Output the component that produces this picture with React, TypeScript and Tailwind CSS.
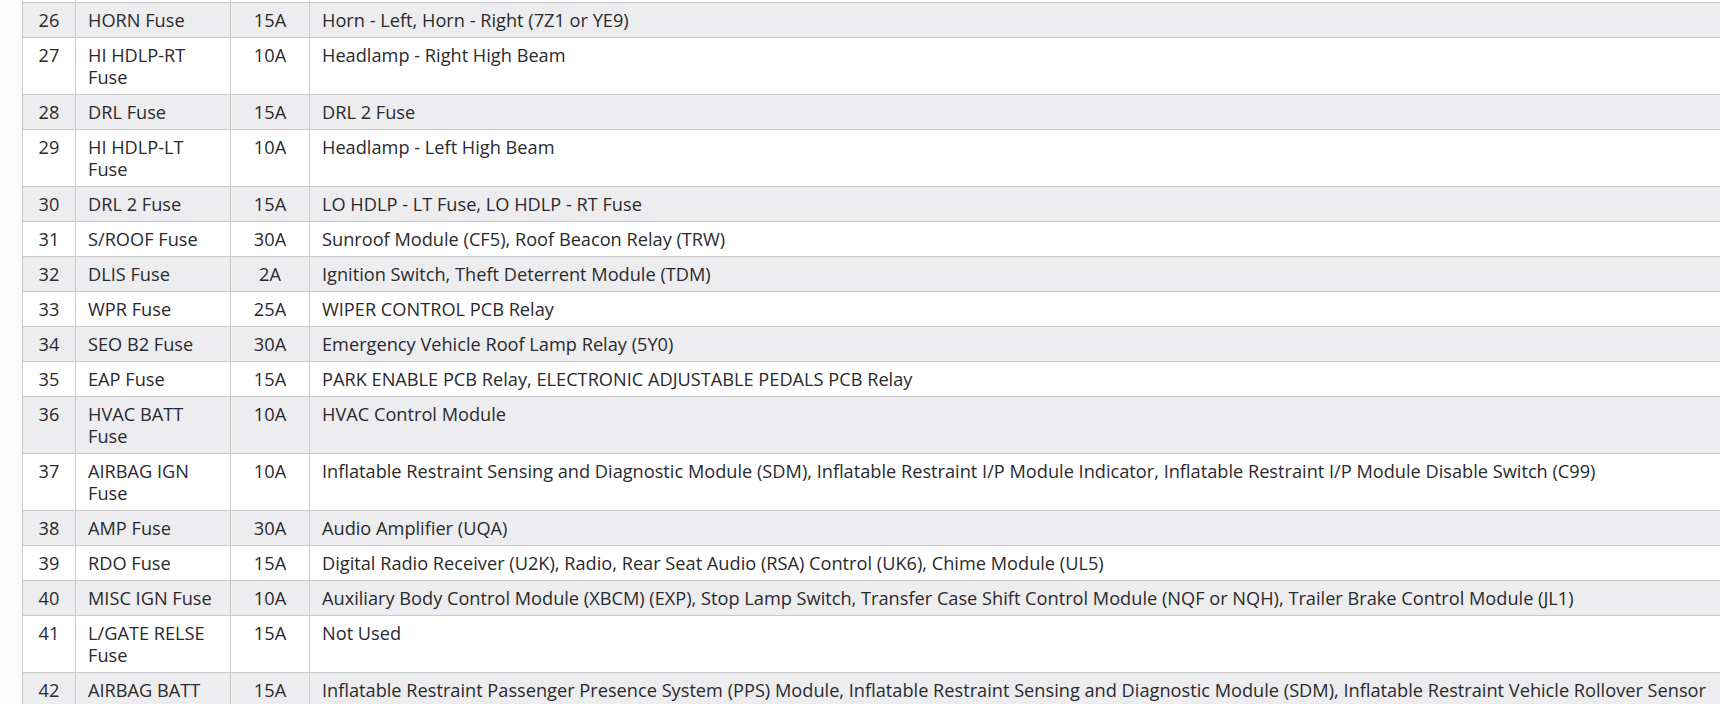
import React from "react";

// ── Fuse rows ─────────────────────────────────────────────
interface FuseRow {
  no: number;
  name: string;
  amps: string;
  usage: string;
}

const rows: FuseRow[] = [
  { no: 26, name: "HORN Fuse", amps: "15A", usage: "Horn - Left, Horn - Right (7Z1 or YE9)" },
  { no: 27, name: "HI HDLP-RT Fuse", amps: "10A", usage: "Headlamp - Right High Beam" },
  { no: 28, name: "DRL Fuse", amps: "15A", usage: "DRL 2 Fuse" },
  { no: 29, name: "HI HDLP-LT Fuse", amps: "10A", usage: "Headlamp - Left High Beam" },
  { no: 30, name: "DRL 2 Fuse", amps: "15A", usage: "LO HDLP - LT Fuse, LO HDLP - RT Fuse" },
  { no: 31, name: "S/ROOF Fuse", amps: "30A", usage: "Sunroof Module (CF5), Roof Beacon Relay (TRW)" },
  { no: 32, name: "DLIS Fuse", amps: "2A", usage: "Ignition Switch, Theft Deterrent Module (TDM)" },
  { no: 33, name: "WPR Fuse", amps: "25A", usage: "WIPER CONTROL PCB Relay" },
  { no: 34, name: "SEO B2 Fuse", amps: "30A", usage: "Emergency Vehicle Roof Lamp Relay (5Y0)" },
  { no: 35, name: "EAP Fuse", amps: "15A", usage: "PARK ENABLE PCB Relay, ELECTRONIC ADJUSTABLE PEDALS PCB Relay" },
  { no: 36, name: "HVAC BATT Fuse", amps: "10A", usage: "HVAC Control Module" },
  {
    no: 37,
    name: "AIRBAG IGN Fuse",
    amps: "10A",
    usage:
      "Inflatable Restraint Sensing and Diagnostic Module (SDM), Inflatable Restraint I/P Module Indicator, Inflatable Restraint I/P Module Disable Switch (C99)",
  },
  { no: 38, name: "AMP Fuse", amps: "30A", usage: "Audio Amplifier (UQA)" },
  {
    no: 39,
    name: "RDO Fuse",
    amps: "15A",
    usage: "Digital Radio Receiver (U2K), Radio, Rear Seat Audio (RSA) Control (UK6), Chime Module (UL5)",
  },
  {
    no: 40,
    name: "MISC IGN Fuse",
    amps: "10A",
    usage:
      "Auxiliary Body Control Module (XBCM) (EXP), Stop Lamp Switch, Transfer Case Shift Control Module (NQF or NQH), Trailer Brake Control Module (JL1)",
  },
  { no: 41, name: "L/GATE RELSE Fuse", amps: "15A", usage: "Not Used" },
  {
    no: 42,
    name: "AIRBAG BATT Fuse",
    amps: "15A",
    usage:
      "Inflatable Restraint Passenger Presence System (PPS) Module, Inflatable Restraint Sensing and Diagnostic Module (SDM), Inflatable Restraint Vehicle Rollover Sensor",
  },
];

export default function App() {
  return (
    <div
      className="h-[704px] w-[1720px] overflow-hidden bg-[#fbfbfb] pl-[22px] text-[18.2px] leading-[22px] text-[#2a2a2e]"
      style={{ fontFamily: '"Open Sans", "Noto Sans", Arial, sans-serif' }}
    >
      <table className="w-[1800px] table-fixed border-collapse bg-white">
        <colgroup>
          <col className="w-[53px]" />
          <col className="w-[155px]" />
          <col className="w-[79px]" />
          <col />
        </colgroup>
        <tbody>
          {/* tail of the previous row */}
          <tr className="h-[2px]">
            <td className="border border-t-0 border-[#c9c9c9] p-0" />
            <td className="border border-t-0 border-[#c9c9c9] p-0" />
            <td className="border border-t-0 border-[#c9c9c9] p-0" />
            <td className="border border-t-0 border-[#c9c9c9] p-0" />
          </tr>
          {rows.map((r) => (
            <tr key={r.no} className={r.no % 2 === 0 ? "bg-[#ededef]" : "bg-white"}>
              <td className="border border-[#c9c9c9] py-[6px] text-center align-top">{r.no}</td>
              <td className="border border-[#c9c9c9] px-3 py-[6px] align-top">{r.name}</td>
              <td className="border border-[#c9c9c9] py-[6px] text-center align-top">{r.amps}</td>
              <td className="whitespace-nowrap border border-[#c9c9c9] px-3 py-[6px] align-top">{r.usage}</td>
            </tr>
          ))}
        </tbody>
      </table>
    </div>
  );
}
